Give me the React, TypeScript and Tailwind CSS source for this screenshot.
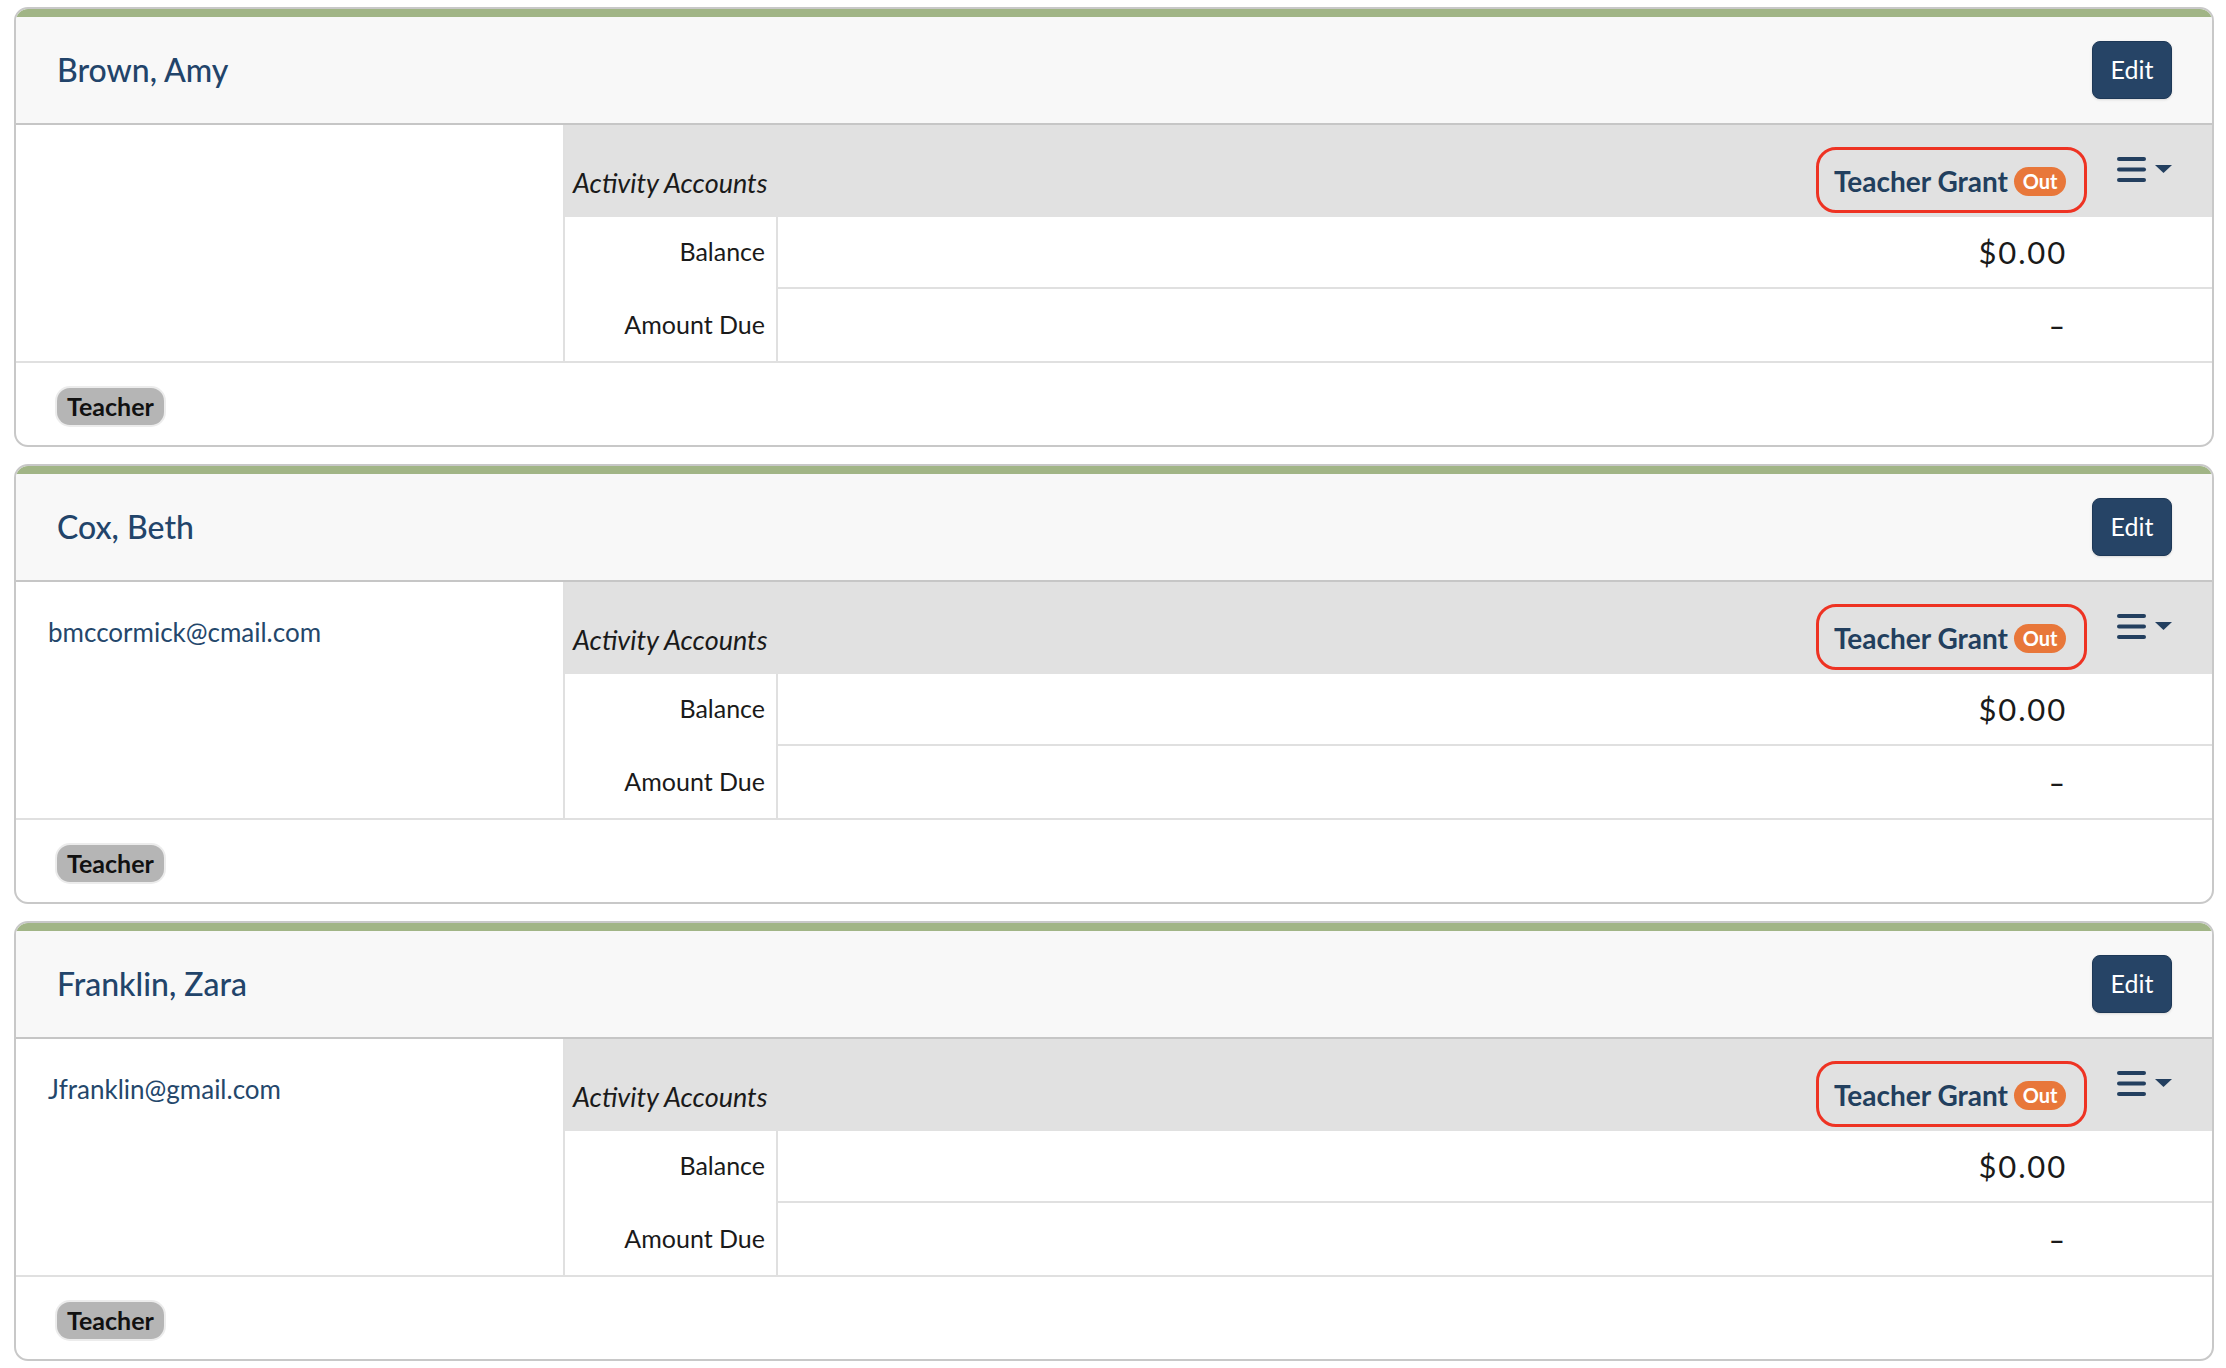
type Member = {
  name: string;
  email?: string;
  role: string;
};

const members: Member[] = [
  { name: "Brown, Amy", role: "Teacher" },
  { name: "Cox, Beth", email: "bmccormick@cmail.com", role: "Teacher" },
  { name: "Franklin, Zara", email: "Jfranklin@gmail.com", role: "Teacher" },
];

function MenuIcon() {
  return (
    <svg width="55" height="25" viewBox="0 0 55 25" fill="#233f5f">
      <rect x="0" y="0" width="29" height="4" rx="2" />
      <rect x="0" y="10.5" width="29" height="4" rx="2" />
      <rect x="0" y="21" width="29" height="4" rx="2" />
      <polygon points="38,8 55,8 46.5,16" />
    </svg>
  );
}

function MemberCard({ member }: { member: Member }) {
  return (
    <div className="overflow-hidden rounded-[14px] border-2 border-[#c8c8c8] bg-white">
      {/* header */}
      <div className="flex h-[116px] items-center justify-between border-t-[8px] border-b-2 border-t-[#a1b586] border-b-[#c6c6c6] bg-[#f8f8f8] pl-[41px] pr-[40px]">
        <h2 className="text-[32px] font-medium leading-none text-[#22446a]">{member.name}</h2>
        <button className="h-[58px] w-[80px] rounded-[8px] border border-[#1d3857] bg-[#264466] text-[25px] text-white shadow-sm">
          Edit
        </button>
      </div>

      {/* body */}
      <div className="flex h-[236px]">
        <div className="w-[549px] border-r-2 border-[#e0e0e0] pl-[32px] pt-[35px]">
          {member.email && (
            <span className="text-[26px] leading-[31px] text-[#24476b]">{member.email}</span>
          )}
        </div>
        <div className="flex flex-1 flex-col">
          <div className="flex h-[92px] bg-[#e1e1e1] pl-[8px] pr-[40px]">
            <span className="mb-[18px] self-end text-[27px] italic leading-[32px] text-[#1a1a1a]">
              Activity Accounts
            </span>
            <div className="flex-1" />
            <div className="mb-[4px] flex h-[66px] items-center self-end rounded-[20px] border-[3px] border-[#ee3323] pl-[15px] pr-[18px] pt-[2px]">
              <span className="text-[28px] font-bold leading-[34px] text-[#223f5e]">Teacher Grant</span>
              <span className="ml-[6px] flex h-[29px] w-[52px] items-center justify-center rounded-full bg-[#e8773a] text-[20px] font-bold leading-none text-white">
                Out
              </span>
            </div>
            <div className="ml-[30px] mt-[32px] self-start">
              <MenuIcon />
            </div>
          </div>
          <div className="flex h-[72px]">
            <div className="flex w-[213px] items-center justify-end border-r-2 border-[#e0e0e0] pb-[2px] pr-[11px] text-[25px] text-[#1a1a1a]">
              Balance
            </div>
            <div className="flex flex-1 items-center justify-end border-b-2 border-[#e0e0e0] pr-[145px] text-[31px] tracking-[0.06em] text-[#1a1a1a]">
              $0.00
            </div>
          </div>
          <div className="flex h-[72px]">
            <div className="flex w-[213px] items-center justify-end border-r-2 border-[#e0e0e0] pr-[11px] text-[25px] text-[#1a1a1a]">
              Amount Due
            </div>
            <div className="flex flex-1 items-center justify-end pr-[147px] text-[30px] text-[#1a1a1a]">
              <span className="inline-block origin-right scale-x-150">-</span>
            </div>
          </div>
        </div>
      </div>

      {/* footer */}
      <div className="h-[84px] border-t-2 border-[#e0e0e0] pl-[41px] pt-[25px]">
        <span className="inline-flex h-[37px] items-center rounded-[13px] bg-[#b5b5b5] px-[10px] text-[25px] font-bold text-[#111] shadow-[0_0_0_2px_#ececec]">
          {member.role}
        </span>
      </div>
    </div>
  );
}

export default function App() {
  return (
    <div
      className="flex min-h-screen flex-col gap-[17px] bg-white pb-[8px] pl-[14px] pr-[12px] pt-[7px]"
      style={{ fontFamily: "Lato, 'Open Sans', sans-serif" }}
    >
      {members.map((m) => (
        <MemberCard key={m.name} member={m} />
      ))}
    </div>
  );
}
